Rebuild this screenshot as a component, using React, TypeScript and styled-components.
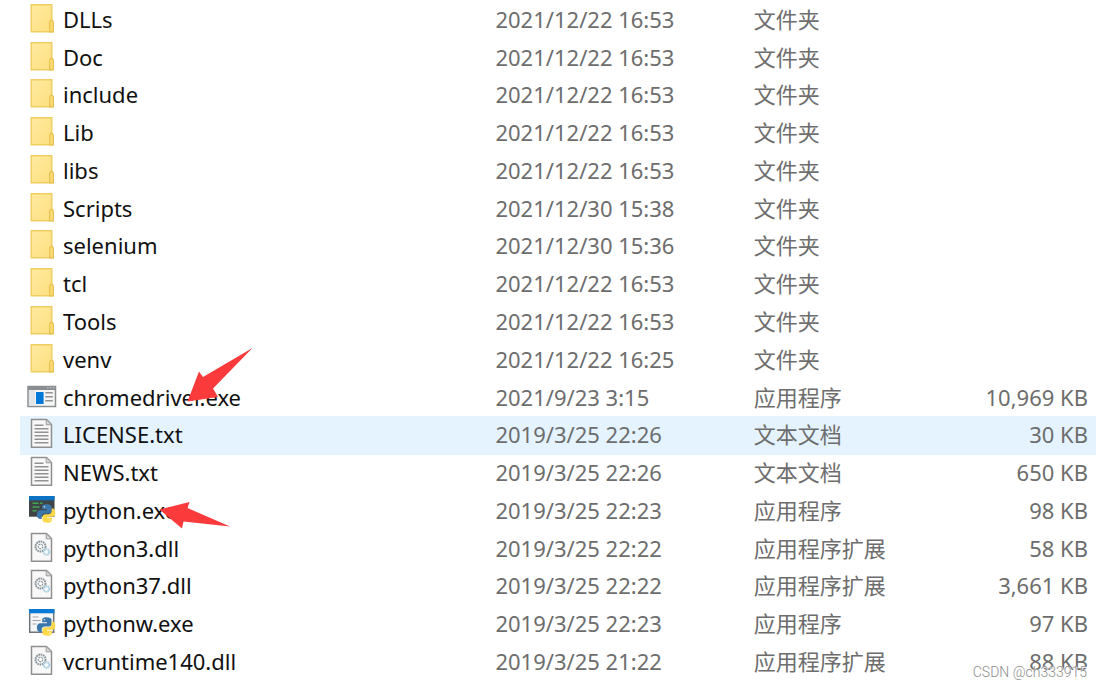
import React from "react";
import styled, { createGlobalStyle } from "styled-components";

const GlobalStyle = createGlobalStyle`
  body {
    margin: 0;
    background: #ffffff;
    font-family: "Noto Sans", "Noto Sans CJK SC", sans-serif;
  }
`;

type Kind = "folder" | "console" | "text" | "python" | "pythonw" | "dll";

interface Entry {
  name: string;
  date: string;
  type: string;
  size?: string;
  kind: Kind;
  selected?: boolean;
  arrow?: "down" | "left";
}

const entries: Entry[] = [
  { name: "DLLs", date: "2021/12/22 16:53", type: "文件夹", kind: "folder" },
  { name: "Doc", date: "2021/12/22 16:53", type: "文件夹", kind: "folder" },
  { name: "include", date: "2021/12/22 16:53", type: "文件夹", kind: "folder" },
  { name: "Lib", date: "2021/12/22 16:53", type: "文件夹", kind: "folder" },
  { name: "libs", date: "2021/12/22 16:53", type: "文件夹", kind: "folder" },
  { name: "Scripts", date: "2021/12/30 15:38", type: "文件夹", kind: "folder" },
  { name: "selenium", date: "2021/12/30 15:36", type: "文件夹", kind: "folder" },
  { name: "tcl", date: "2021/12/22 16:53", type: "文件夹", kind: "folder" },
  { name: "Tools", date: "2021/12/22 16:53", type: "文件夹", kind: "folder" },
  { name: "venv", date: "2021/12/22 16:25", type: "文件夹", kind: "folder" },
  { name: "chromedriver.exe", date: "2021/9/23 3:15", type: "应用程序", size: "10,969 KB", kind: "console", arrow: "down" },
  { name: "LICENSE.txt", date: "2019/3/25 22:26", type: "文本文档", size: "30 KB", kind: "text", selected: true },
  { name: "NEWS.txt", date: "2019/3/25 22:26", type: "文本文档", size: "650 KB", kind: "text" },
  { name: "python.exe", date: "2019/3/25 22:23", type: "应用程序", size: "98 KB", kind: "python", arrow: "left" },
  { name: "python3.dll", date: "2019/3/25 22:22", type: "应用程序扩展", size: "58 KB", kind: "dll" },
  { name: "python37.dll", date: "2019/3/25 22:22", type: "应用程序扩展", size: "3,661 KB", kind: "dll" },
  { name: "pythonw.exe", date: "2019/3/25 22:23", type: "应用程序", size: "97 KB", kind: "pythonw" },
  { name: "vcruntime140.dll", date: "2019/3/25 21:22", type: "应用程序扩展", size: "88 KB", kind: "dll" },
];

const Page = styled.main`
  position: relative;
  box-sizing: border-box;
  height: 100vh;
  min-height: 600px;
  padding: 1px 6px 6px 20px;
`;

const FileTable = styled.table`
  width: 100%;
  height: 100%;
  border-collapse: separate;
  border-spacing: 0;
  table-layout: fixed;
`;

const NameCol = styled.col`
  width: 44%;
`;

const DateCol = styled.col`
  width: 24%;
`;

const Row = styled.tr<{ $selected?: boolean }>`
  background: ${(p) => (p.$selected ? "#e5f3ff" : "transparent")};
  box-shadow: ${(p) => (p.$selected ? "0 1px 0 #e5f3ff" : "none")};
`;

const Cell = styled.td<{ $align?: "left" | "right" }>`
  padding: ${(p) => (p.$align === "right" ? "0 8px 2px 0" : "0 0 2px 2px")};
  color: #6d6d6d;
  font-size: 22px;
  line-height: 32px;
  text-align: ${(p) => p.$align ?? "left"};
  white-space: nowrap;
`;

const NameCell = styled(Cell)`
  padding: 0 0 2px 7px;
  color: #111111;
`;

const NameBox = styled.div`
  position: relative;
  display: flex;
  align-items: center;
  gap: 6px;
`;

const IconSvg = styled.svg`
  display: block;
  flex: none;
  width: 30px;
  height: 32px;
`;

const DownArrow = styled.svg`
  position: absolute;
  left: 160px;
  top: -34px;
  width: 68px;
  height: 56px;
`;

const LeftArrow = styled.svg`
  position: absolute;
  left: 131px;
  top: 6px;
  width: 74px;
  height: 30px;
`;

const Watermark = styled.div`
  position: absolute;
  right: 15px;
  bottom: 6px;
  color: #8c8c8c;
  font-family: Roboto, sans-serif;
  font-size: 14px;
  font-weight: 300;
  line-height: 18px;
  text-shadow: 0 0 1px #ffffff, 1px 1px 0 #ffffff;
`;

function PythonLogo() {
  return (
    <g>
      <path
        d="M19.5 10.2c-4 0-4.300 1.700-4.300 2.800v2.300h4.800v.9h-6.800c-2 0-3.300 1.700-3.300 4.300s1.200 4.400 3.100 4.400h1.700v-2.500c0-1.700 1.500-3 3.200-3h4.200c1.400 0 2.500-1.100 2.500-2.500V13c0-1.700-1.800-2.800-5.100-2.800z"
        fill="#3a77ab"
      />
      <path
        d="M20.500 28.800c4 0 4.500-1.700 4.500-2.800v-2.300h-4.800v-.9h5.100c2 0 3-1.700 3-4.100s-1.100-4.100-2.700-4.100h-.9v2.400c0 1.700-1.500 3.200-3.100 3.200h-3.400c-1.500 0-2.700 1.200-2.700 2.600V26c0 1.700 1.800 2.800 5 2.800z"
        fill="#ffd94a"
      />
      <circle cx="17.400" cy="12.800" r=".8" fill="#dbe8f2" />
      <circle cx="22.700" cy="26.300" r=".8" fill="#fff6cf" />
    </g>
  );
}

function PageOutline() {
  return (
    <>
      <path d="M4.500 1.500h15l5 5v22.700h-20z" fill="#f8f8f8" stroke="#8f8f8f" strokeWidth="1.500" />
      <path d="M19.200 1.500v5.300h5.300z" fill="#dcdcdc" stroke="#9a9a9a" />
    </>
  );
}

function FileIcon({ kind }: { kind: Kind }) {
  return (
    <IconSvg viewBox="0 0 30 32" aria-hidden="true">
      {kind === "folder" && (
        <>
          <defs>
            <linearGradient id="folderFill" x1="0" y1="0" x2="1" y2="1">
              <stop offset="0" stopColor="#ffeaa0" />
              <stop offset="1" stopColor="#fddf80" />
            </linearGradient>
          </defs>
          <path d="M4.200 1.700h20.600v27.100H4.200z" fill="url(#folderFill)" stroke="#efcd60" strokeWidth="1.400" />
          <path d="M22.700 28.800V19l1.100-1.600h1.400l1.200 1.600v9.800z" fill="#fbdc78" stroke="#e7c04e" strokeWidth="1.200" />
        </>
      )}
      {kind === "console" && (
        <>
          <path d="M1 5.500h27.500v20H1z" fill="#f5f5f5" stroke="#8b8e91" strokeWidth="1.500" />
          <path d="M1 5h27.500v4H1z" fill="#8b8e91" />
          <path d="M2 9h6v15.800H2z" fill="#e2e5e8" />
          <path d="M20 6.700h1.500M23 6.700h1.500M26 6.700h1.500" stroke="#b9bbbd" strokeWidth="1.200" />
          <path d="M9 11h7.600v12H9z" fill="#0078d7" />
          <path d="M18.300 11.800h7.500M18.300 15.800h7.500M18.300 19.800h7.500" stroke="#939393" strokeWidth="1.400" />
        </>
      )}
      {kind === "text" && (
        <>
          <PageOutline />
          <path
            d="M7.500 7.200h9M7.500 10.700h14M7.500 14.200h14M7.500 17.700h14M7.500 21.200h14M7.500 24.700h14"
            stroke="#929292"
            strokeWidth="1.500"
          />
        </>
      )}
      {kind === "dll" && (
        <>
          <PageOutline />
          <circle cx="13.500" cy="14.500" r="5" fill="#ffffff" stroke="#8c959b" strokeWidth="2" strokeDasharray="1.700 .6" />
          <circle cx="13.500" cy="14.500" r="2.300" fill="none" stroke="#8c959b" strokeWidth="1.200" strokeDasharray="2 .6" />
          <circle cx="19.500" cy="20" r="2.800" fill="#f2f9fd" stroke="#a5cbe0" strokeWidth="1.800" strokeDasharray="1.500 .5" />
        </>
      )}
      {kind === "python" && (
        <>
          <path d="M2 2h25.500v20.700H2z" fill="#3f4446" />
          <path d="M2 2h25.500v4.300H2z" fill="#0b72c4" />
          <path d="M5.500 9.200h6M13 9.200h2.500M5.500 13h7M5.500 16.700h4" stroke="#3fa653" strokeWidth="1.400" />
          <PythonLogo />
        </>
      )}
      {kind === "pythonw" && (
        <>
          <path d="M2.700 3h24v22.300h-24z" fill="#f5f6f7" stroke="#717579" strokeWidth="1.500" />
          <path d="M2 2h25.500v4.300H2z" fill="#0b7bd5" />
          <path d="M5.500 10h6M5.500 13.500h8M5.500 17h4" stroke="#a3a5a8" strokeWidth="1.200" />
          <PythonLogo />
        </>
      )}
    </IconSvg>
  );
}

export default function App() {
  return (
    <>
      <GlobalStyle />
      <Page>
        <FileTable>
          <colgroup>
            <NameCol />
            <DateCol />
            <col />
            <col />
          </colgroup>
          <tbody>
            {entries.map((e) => (
              <Row key={e.name} $selected={e.selected}>
                <NameCell>
                  <NameBox>
                    <FileIcon kind={e.kind} />
                    {e.name}
                    {e.arrow === "down" && (
                      <DownArrow viewBox="0 0 68 56" aria-hidden="true">
                        <path d="M65.500 1 16 30 12 24.500.5 54.500 31 50l-5-8.500z" fill="#fb3a3b" />
                      </DownArrow>
                    )}
                    {e.arrow === "left" && (
                      <LeftArrow viewBox="0 0 74 30" aria-hidden="true">
                        <path d="M1.500 9.500 31.500 2l-2 6L72 26.500 25.500 21.500 24 28.500z" fill="#fb3a3b" />
                      </LeftArrow>
                    )}
                  </NameBox>
                </NameCell>
                <Cell>{e.date}</Cell>
                <Cell>{e.type}</Cell>
                <Cell $align="right">{e.size}</Cell>
              </Row>
            ))}
          </tbody>
        </FileTable>
        <Watermark>CSDN @ch333915</Watermark>
      </Page>
    </>
  );
}
